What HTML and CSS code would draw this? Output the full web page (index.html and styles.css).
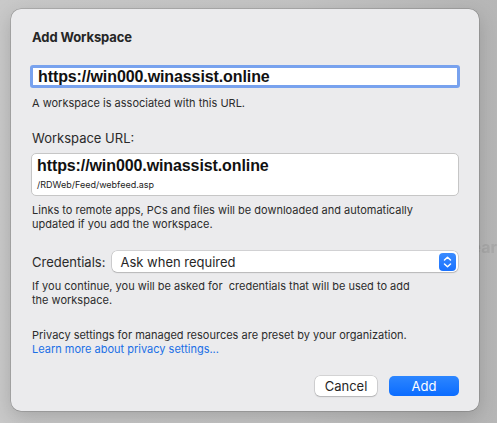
FILE: index.html
```html
<!DOCTYPE html>
<html>
<head>
<meta charset="utf-8">
<link rel="stylesheet" href="styles.css">
</head>
<body>
<div class="backdrop-text">Sear</div>
<div class="dialog">
  <h1 class="title">Add Workspace</h1>
  <div class="url-input">https://win000.winassist.online</div>
  <p class="note note-first">A workspace is associated with this URL.</p>
  <div class="label">Workspace URL:</div>
  <div class="url-box">
    <div class="url-main">https://win000.winassist.online</div>
    <div class="url-path">/RDWeb/Feed/webfeed.asp</div>
  </div>
  <p class="note note-links">Links to remote apps, PCs and files will be downloaded and automatically<br>updated if you add the workspace.</p>
  <div class="cred-row">
    <span class="label cred-label">Credentials:</span>
    <div class="select">
      <span>Ask when required</span>
      <span class="stepper">
        <svg width="17" height="18" viewBox="0 0 17 18">
          <path d="M5.5 7 L8.5 4.2 L11.5 7" fill="none" stroke="#fff" stroke-width="1.5" stroke-linecap="round" stroke-linejoin="round"/>
          <path d="M5.5 11 L8.5 13.8 L11.5 11" fill="none" stroke="#fff" stroke-width="1.5" stroke-linecap="round" stroke-linejoin="round"/>
        </svg>
      </span>
    </div>
  </div>
  <p class="note note-cred">If you continue, you will be asked for &nbsp;credentials that will be used to add<br>the workspace.</p>
  <p class="note note-privacy">Privacy settings for managed resources are preset by your organization.<br><a class="link" href="#">Learn more about privacy settings...</a></p>
  <div class="buttons">
    <button class="btn btn-cancel">Cancel</button>
    <button class="btn btn-add">Add</button>
  </div>
</div>
</body>
</html>
```

FILE: styles.css
```css
html, body {
  margin: 0;
  padding: 0;
}
body {
  width: 497px;
  height: 423px;
  overflow: hidden;
  background: linear-gradient(90deg, #c9c9c9 0%, #c4c4c4 60%, #b6b6b6 100%);
  font-family: Inter, "Noto Sans", sans-serif;
  color: #262626;
  position: relative;
}
.backdrop-text {
  position: absolute;
  right: 0;
  top: 237px;
  font-size: 16px;
  font-weight: 700;
  color: #a9a9a9;
  filter: blur(0.6px);
  white-space: nowrap;
}
.dialog {
  position: relative;
  margin: 9px 0 0 11px;
  width: 468px;
  height: 402px;
  box-sizing: border-box;
  background: #ebebed;
  border-radius: 10px;
  box-shadow: 0 0 0 0.5px rgba(0,0,0,0.25), 0 6px 20px rgba(0,0,0,0.18);
  padding: 20px 20px 0 21px;
  display: flex;
  flex-direction: column;
}
.title {
  margin: 0;
  font-size: 13px;
  font-weight: 700;
  line-height: 16px;
  letter-spacing: -0.1px;
  color: #262626;
}
.url-input {
  margin: 20px 0 0 -2px;
  width: 430px;
  height: 23px;
  box-sizing: border-box;
  background: #fff;
  border: 3px solid #78a2ee;
  border-radius: 3px;
  padding-left: 5px;
  font-family: "Liberation Sans", Arial, sans-serif;
  font-weight: 700;
  font-size: 16px;
  letter-spacing: -0.1px;
  line-height: 17px;
  color: #111;
}
.note {
  margin: 0;
  font-size: 11px;
  line-height: 14px;
  color: #2c2c2c;
}
.note-first { margin-top: 8px; }
.label {
  font-size: 13px;
  line-height: 16px;
  color: #2a2a2a;
}
.dialog > .label { margin-top: 20px; }
.url-box {
  margin: 7px 0 0 -1px;
  width: 428px;
  height: 43px;
  box-sizing: border-box;
  background: #fff;
  border: 1px solid #c6c6c6;
  border-radius: 5px;
  padding: 3px 0 0 5px;
}
.url-main {
  font-family: "Liberation Sans", Arial, sans-serif;
  font-weight: 700;
  font-size: 16px;
  letter-spacing: -0.1px;
  line-height: 18px;
  color: #111;
}
.url-path {
  margin-top: 4px;
  font-size: 9px;
  line-height: 11px;
  color: #222;
}
.note-links { margin-top: 7px; }
.cred-row {
  margin-top: 20px;
  display: flex;
  align-items: center;
  gap: 7px;
}
.select {
  flex: 1;
  height: 21px;
  box-sizing: border-box;
  background: #fff;
  border-radius: 5px;
  box-shadow: 0 0 0 0.5px rgba(0,0,0,0.22), 0 1px 1.5px rgba(0,0,0,0.12);
  display: flex;
  align-items: center;
  justify-content: space-between;
  padding: 0 2px 0 8px;
  font-size: 13px;
  color: #262626;
  margin-right: 1px;
}
.stepper {
  width: 17px;
  height: 18px;
  background: linear-gradient(#3a8bff, #1a72ff);
  border-radius: 4px;
  display: flex;
}
.note-cred { margin-top: 7px; }
.note-privacy { margin-top: 21px; }
.link {
  color: #1a6fe6;
  text-decoration: none;
}
.buttons {
  margin-top: 20px;
  display: flex;
  justify-content: flex-end;
  gap: 12px;
  padding-right: 0;
}
.btn {
  height: 20px;
  border: none;
  border-radius: 5px;
  font-family: Inter, "Noto Sans", sans-serif;
  font-size: 13px;
  line-height: 20px;
  padding: 0;
}
.btn-cancel {
  width: 62px;
  background: #fff;
  color: #262626;
  box-shadow: 0 0 0 0.5px rgba(0,0,0,0.2), 0 1px 1.5px rgba(0,0,0,0.15);
}
.btn-add {
  width: 70px;
  background: linear-gradient(#2d86ff, #0b6cff);
  color: #fff;
}
```
